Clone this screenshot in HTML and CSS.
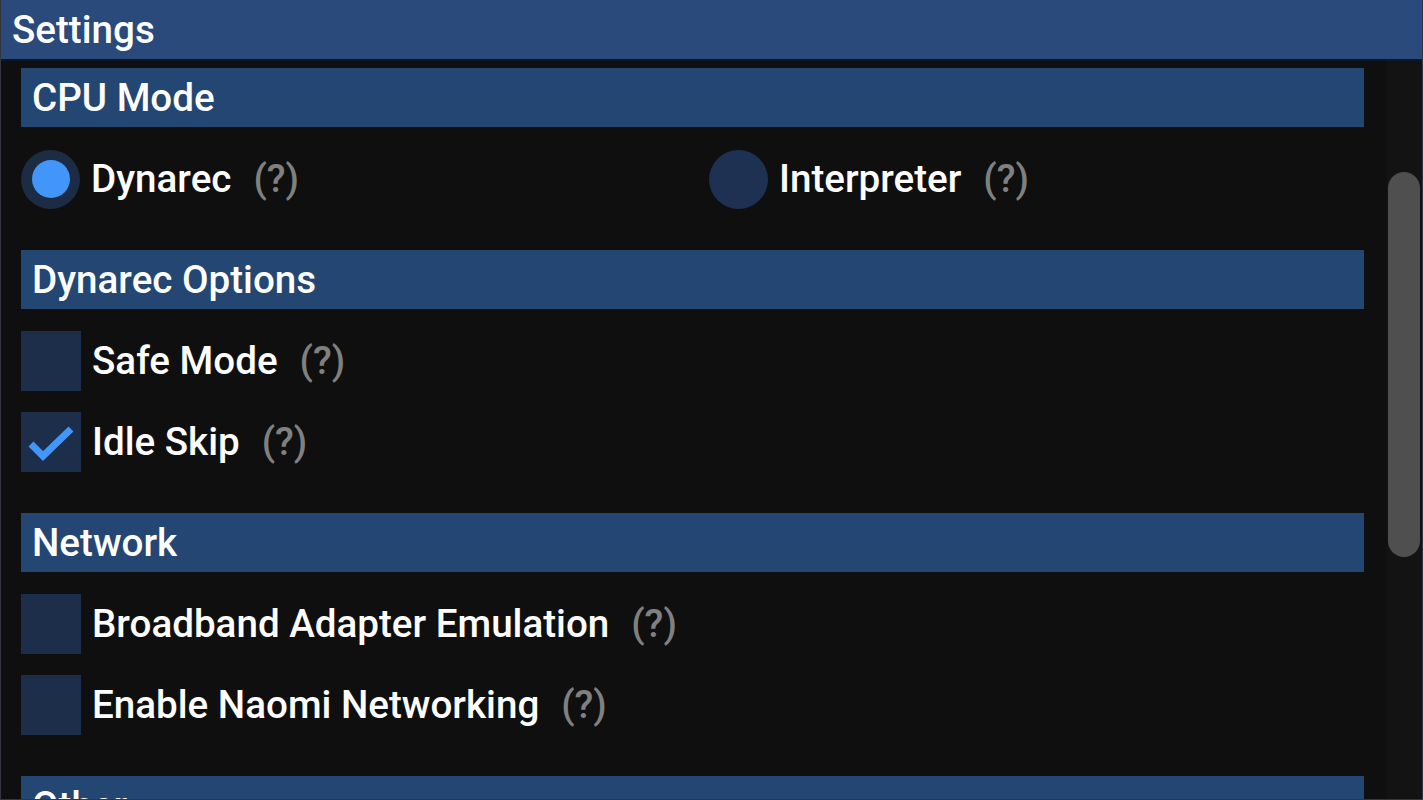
FILE: index.html
```html
<!DOCTYPE html>
<html>
<head>
<meta charset="utf-8">
<link rel="stylesheet" href="styles.css">
</head>
<body>
<div class="window">
  <div class="titlebar">Settings</div>
  <div class="body">
    <div class="content">
      <div class="section">
        <div class="header">CPU Mode</div>
        <div class="radio-row">
          <div class="item">
            <span class="radio on"><span class="dot"></span></span>
            <span class="label">Dynarec</span><span class="help">(?)</span>
          </div>
          <div class="item">
            <span class="radio"></span>
            <span class="label">Interpreter</span><span class="help">(?)</span>
          </div>
        </div>
      </div>
      <div class="section">
        <div class="header">Dynarec Options</div>
        <div class="item">
          <span class="check"></span>
          <span class="label">Safe Mode</span><span class="help">(?)</span>
        </div>
        <div class="item">
          <span class="check"><svg viewBox="0 0 60 60" width="60" height="60"><polyline points="10,32 22,44 50,17" fill="none" stroke="#4296fa" stroke-width="7" stroke-linecap="butt" stroke-linejoin="miter"/></svg></span>
          <span class="label">Idle Skip</span><span class="help">(?)</span>
        </div>
      </div>
      <div class="section">
        <div class="header">Network</div>
        <div class="item">
          <span class="check"></span>
          <span class="label">Broadband Adapter Emulation</span><span class="help">(?)</span>
        </div>
        <div class="item">
          <span class="check"></span>
          <span class="label">Enable Naomi Networking</span><span class="help">(?)</span>
        </div>
      </div>
      <div class="section">
        <div class="header">Other</div>
      </div>
    </div>
    <div class="scrollbar"><div class="thumb"></div></div>
  </div>
</div>
</body>
</html>
```
FILE: styles.css
```css
html, body {
  margin: 0;
  padding: 0;
  background: #0f0f0f;
  overflow: hidden;
}
.window {
  width: 1423px;
  height: 800px;
  box-sizing: border-box;
  border-left: 1px solid #35363d;
  border-right: 1px solid #35363d;
  border-bottom: 1px solid #35363d;
  display: flex;
  flex-direction: column;
  font-family: Roboto, "Liberation Sans", sans-serif;
  font-weight: 500;
  font-size: 38.6px;
  color: #ffffff;
  overflow: hidden;
}
.titlebar {
  height: 61px;
  flex: none;
  background: #294a7a;
  border-bottom: 2px solid #0c1828;
  display: flex;
  align-items: center;
  padding-left: 11px;
  box-sizing: border-box;
  line-height: 1;
  padding-top: 1px;
}
.body {
  flex: 1;
  display: flex;
  min-height: 0;
}
.content {
  flex: 1;
  padding: 7px 23px 0 20px;
  overflow: hidden;
}
.section {
  display: flex;
  flex-direction: column;
  gap: 21px;
  margin-bottom: 41px;
}
.header {
  height: 59px;
  background: #234672;
  display: flex;
  align-items: center;
  padding-left: 11px;
  line-height: 1;
  padding-top: 1px;
  box-sizing: border-box;
  margin-bottom: 1px;
}
.radio-row {
  display: grid;
  grid-template-columns: 688px 1fr;
}
.item {
  display: flex;
  align-items: center;
  height: 60px;
  line-height: 1;
}
.radio {
  width: 59px;
  height: 59px;
  border-radius: 50%;
  background: #1e3152;
  display: flex;
  align-items: center;
  justify-content: center;
  flex: none;
}
.radio.on {
  background: #1c2c45;
}
.dot {
  width: 38px;
  height: 38px;
  border-radius: 50%;
  background: #4296fa;
}
.check {
  width: 60px;
  height: 60px;
  background: #1d2e4a;
  flex: none;
  display: block;
}
.check svg {
  display: block;
}
.label {
  margin-left: 11px;
}
.help {
  margin-left: 22px;
  color: #808080;
}
.scrollbar {
  width: 35px;
  flex: none;
  background: #131313;
  padding-top: 111px;
  box-sizing: border-box;
}
.thumb {
  margin-left: 1px;
  width: 32px;
  height: 385px;
  border-radius: 16px;
  background: #4f4f4f;
}
```
